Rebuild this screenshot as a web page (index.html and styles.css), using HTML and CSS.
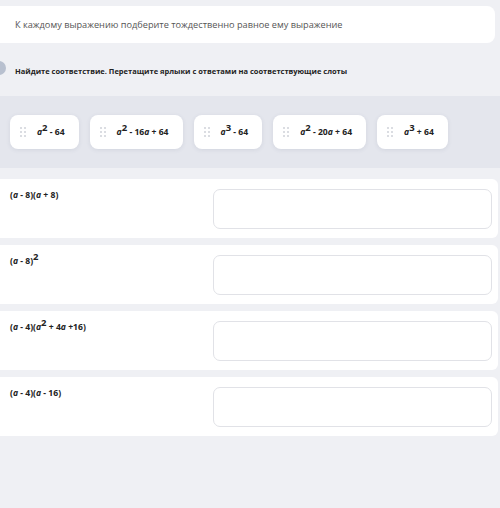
FILE: index.html
```html
<!DOCTYPE html>
<html lang="ru">
<head>
<meta charset="utf-8">
<link rel="stylesheet" href="styles.css">
</head>
<body>
<div class="header">К каждому выражению подберите тождественно равное ему выражение</div>
<div class="instr">
  <span class="num"></span>
  <span class="instr-text">Найдите соответствие. Перетащите ярлыки с ответами на соответствующие слоты</span>
</div>
<div class="options">
  <div class="card"><svg class="dots" width="6" height="10" viewBox="0 0 6 10"><g fill="#cfd2d8"><circle cx="1" cy="1" r="1"/><circle cx="5" cy="1" r="1"/><circle cx="1" cy="5" r="1"/><circle cx="5" cy="5" r="1"/><circle cx="1" cy="9" r="1"/><circle cx="5" cy="9" r="1"/></g></svg><span class="math"><i>a</i><sup>2</sup> - 64</span></div>
  <div class="card"><svg class="dots" width="6" height="10" viewBox="0 0 6 10"><g fill="#cfd2d8"><circle cx="1" cy="1" r="1"/><circle cx="5" cy="1" r="1"/><circle cx="1" cy="5" r="1"/><circle cx="5" cy="5" r="1"/><circle cx="1" cy="9" r="1"/><circle cx="5" cy="9" r="1"/></g></svg><span class="math"><i>a</i><sup>2</sup> - 16<i>a</i> + 64</span></div>
  <div class="card"><svg class="dots" width="6" height="10" viewBox="0 0 6 10"><g fill="#cfd2d8"><circle cx="1" cy="1" r="1"/><circle cx="5" cy="1" r="1"/><circle cx="1" cy="5" r="1"/><circle cx="5" cy="5" r="1"/><circle cx="1" cy="9" r="1"/><circle cx="5" cy="9" r="1"/></g></svg><span class="math"><i>a</i><sup>3</sup> - 64</span></div>
  <div class="card"><svg class="dots" width="6" height="10" viewBox="0 0 6 10"><g fill="#cfd2d8"><circle cx="1" cy="1" r="1"/><circle cx="5" cy="1" r="1"/><circle cx="1" cy="5" r="1"/><circle cx="5" cy="5" r="1"/><circle cx="1" cy="9" r="1"/><circle cx="5" cy="9" r="1"/></g></svg><span class="math"><i>a</i><sup>2</sup> - 20<i>a</i> + 64</span></div>
  <div class="card"><svg class="dots" width="6" height="10" viewBox="0 0 6 10"><g fill="#cfd2d8"><circle cx="1" cy="1" r="1"/><circle cx="5" cy="1" r="1"/><circle cx="1" cy="5" r="1"/><circle cx="5" cy="5" r="1"/><circle cx="1" cy="9" r="1"/><circle cx="5" cy="9" r="1"/></g></svg><span class="math"><i>a</i><sup>3</sup> + 64</span></div>
</div>
<div class="rows">
  <div class="row"><span class="math label">(<i>a</i> - 8)(<i>a</i> + 8)</span><div class="slot"></div></div>
  <div class="row"><span class="math label">(<i>a</i> - 8)<sup>2</sup></span><div class="slot"></div></div>
  <div class="row"><span class="math label">(<i>a</i> - 4)(<i>a</i><sup>2</sup> + 4<i>a</i> +16)</span><div class="slot"></div></div>
  <div class="row"><span class="math label">(<i>a</i> - 4)(<i>a</i> - 16)</span><div class="slot"></div></div>
</div>
</body>
</html>
```
FILE: styles.css
```css
* { box-sizing: border-box; }
body {
  margin: 0;
  background: #eff0f4;
  font-family: "Open Sans", "Noto Sans", sans-serif;
  color: #333;
}
.header {
  margin-top: 6px;
  width: 495px;
  height: 37px;
  background: #fff;
  border-radius: 0 8px 8px 0;
  display: flex;
  align-items: center;
  padding-left: 15px;
  font-size: 9.2px;
  color: #555;
  padding-bottom: 1px;
}
.instr {
  height: 53px;
  display: flex;
  align-items: center;
  padding-top: 2px;
}
.num {
  width: 14px;
  height: 14px;
  border-radius: 50%;
  background: #b8c0cf;
  margin-left: -8px;
  margin-right: 9px;
  margin-top: -6px;
  flex: none;
}
.instr-text {
  font-size: 7.5px;
  font-weight: 700;
  color: #222;
}
.options {
  background: #e4e6ed;
  height: 72px;
  padding: 19px 10px 0;
  display: flex;
  gap: 11px;
  align-items: flex-start;
}
.card {
  height: 34px;
  background: #fff;
  border-radius: 8px;
  box-shadow: 0 1px 4px rgba(80, 90, 120, 0.12);
  display: flex;
  align-items: center;
  padding: 0 14px 0 10px;
  gap: 11px;
}
.dots { flex: none; }
.math {
  font-family: "Open Sans", "DejaVu Sans", sans-serif;
  font-size: 8.6px;
  font-weight: 700;
  color: #222;
  white-space: nowrap;
}
.math i { font-style: italic; }
.math sup {
  font-size: 9.5px;
  line-height: 0;
  vertical-align: 4px;
}
.rows {
  padding-top: 11px;
  display: flex;
  flex-direction: column;
  gap: 7px;
}
.row {
  width: 498px;
  height: 59px;
  background: #fff;
  border-radius: 0 6px 6px 0;
  display: flex;
  justify-content: space-between;
  align-items: flex-start;
}
.label {
  padding: 10px 0 0 10px;
}
.slot {
  width: 279px;
  height: 40px;
  margin: 10px 6px 0 0;
  border: 1px solid #e1e2e7;
  border-radius: 7px;
}
```
